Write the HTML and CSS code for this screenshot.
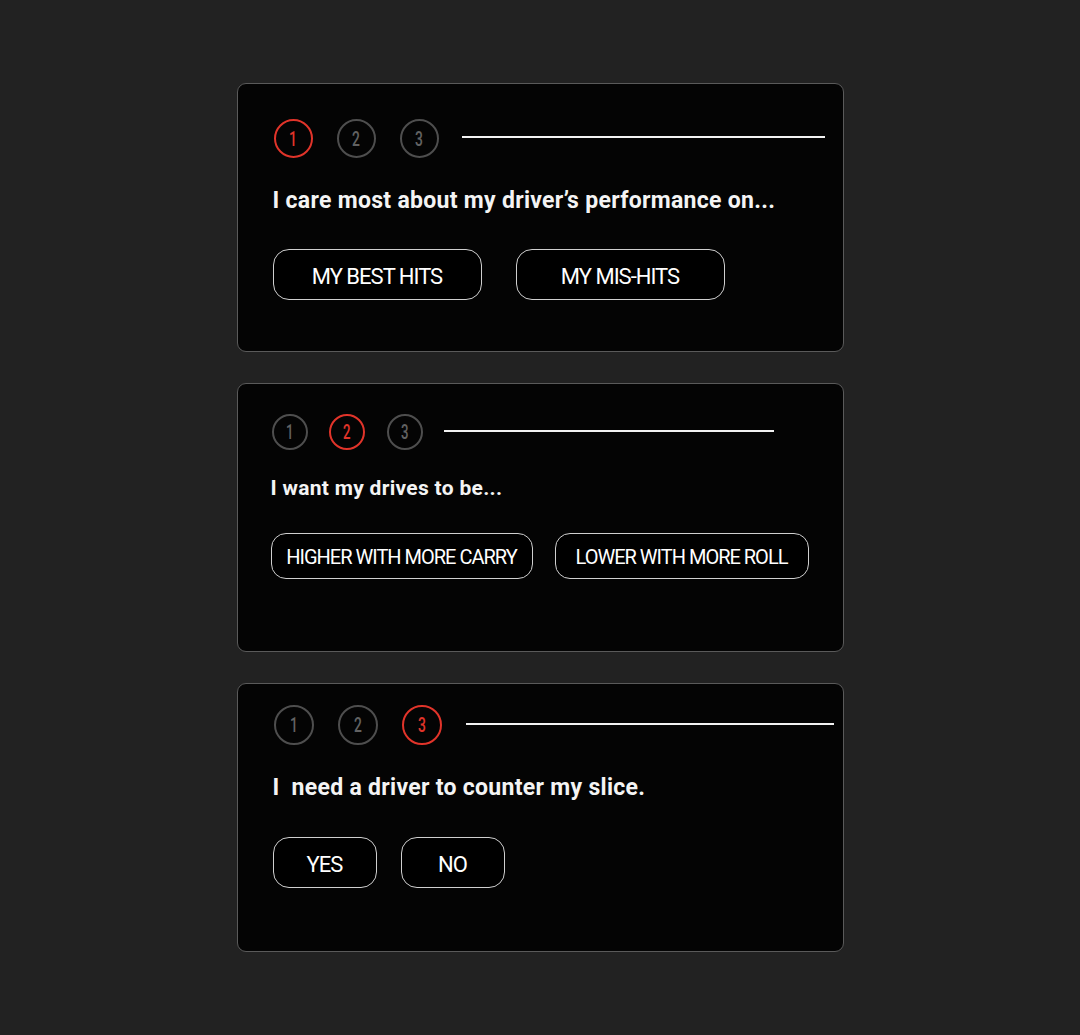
FILE: index.html
```html
<!DOCTYPE html>
<html lang="en">
<head>
<meta charset="utf-8">
<link rel="stylesheet" href="styles.css">
</head>
<body>
<main class="stack">
  <section class="card card-1">
    <div class="steps">
      <span class="step active"><span class="num">1</span></span>
      <span class="step"><span class="num">2</span></span>
      <span class="step"><span class="num">3</span></span>
      <span class="rule"></span>
    </div>
    <h2 class="question">I care most about my driver’s performance on...</h2>
    <div class="options">
      <button class="opt">MY BEST HITS</button>
      <button class="opt">MY MIS-HITS</button>
    </div>
  </section>

  <section class="card card-2">
    <div class="steps">
      <span class="step"><span class="num">1</span></span>
      <span class="step active"><span class="num">2</span></span>
      <span class="step"><span class="num">3</span></span>
      <span class="rule"></span>
    </div>
    <h2 class="question">I want my drives to be...</h2>
    <div class="options">
      <button class="opt opt-wide">HIGHER WITH MORE CARRY</button>
      <button class="opt opt-mid">LOWER WITH MORE ROLL</button>
    </div>
  </section>

  <section class="card card-3">
    <div class="steps">
      <span class="step"><span class="num">1</span></span>
      <span class="step"><span class="num">2</span></span>
      <span class="step active"><span class="num">3</span></span>
      <span class="rule"></span>
    </div>
    <h2 class="question">I&nbsp; need a driver to counter my slice.</h2>
    <div class="options">
      <button class="opt">YES</button>
      <button class="opt">NO</button>
    </div>
  </section>
</main>
</body>
</html>
```
FILE: styles.css
```css
html, body {
  margin: 0;
  padding: 0;
}
body {
  background: #222222;
  font-family: Roboto, "Liberation Sans", sans-serif;
  color: #ffffff;
  height: 1035px;
}
.stack {
  width: 607px;
  margin: 0 auto;
  padding-top: 83px;
  display: flex;
  flex-direction: column;
  gap: 31px;
}
.card {
  box-sizing: border-box;
  height: 269px;
  background: #040404;
  border: 1px solid #5a5a5a;
  border-radius: 9px;
  padding: 35px 18px 0 35px;
}
.steps {
  display: flex;
  align-items: center;
}
.step {
  box-sizing: border-box;
  width: 39px;
  height: 39px;
  border-radius: 50%;
  border: 2px solid #4e4e4e;
  display: flex;
  align-items: center;
  justify-content: center;
  color: #626262;
  font-size: 21px;
  font-weight: 500;
  margin-right: 24px;
  flex: none;
}
.step .num {
  display: inline-block;
  transform: scaleX(0.66);
}
.step.active {
  border-color: #e1342a;
  color: #e1342a;
}
.rule {
  flex: 1;
  height: 2px;
  background: #f2f2f2;
  margin-left: -1px;
  margin-top: -3px;
}
.question {
  margin: 0;
  font-size: 23px;
  font-weight: 700;
  letter-spacing: 0.3px;
  color: #f4f4f4;
}
.options {
  display: flex;
}
.opt {
  box-sizing: border-box;
  background: #000;
  color: #fff;
  border: 1px solid #cfcfcf;
  border-radius: 16px;
  font-family: Roboto, "Liberation Sans", sans-serif;
  font-size: 22px;
  font-weight: 400;
  letter-spacing: -1px;
  padding: 3px 0 0;
}

/* card 1 */
.card-1 .steps { margin-left: 1px; }
.card-1 .question { margin-top: 29px; line-height: 28px; }
.card-1 .options { margin-top: 34px; gap: 34px; }
.card-1 .opt { width: 209px; height: 51px; }

/* card 2 */
.card-2 { padding-top: 30px; padding-left: 33px; }
.card-2 .steps { margin-left: 1px; }
.card-2 .step { width: 36px; height: 36px; margin-right: 21px; font-size: 20px; }
.card-2 .step:nth-child(2) { margin-right: 22px; }
.card-2 .rule { flex: none; width: 330px; margin-left: 0; }
.card-2 .question { margin-top: 24px; font-size: 21px; line-height: 28px; }
.card-2 .options { margin-top: 31px; gap: 22px; }
.card-2 .opt { height: 46px; font-size: 20px; border-radius: 15px; padding-top: 1px; }
.card-2 .opt-wide { width: 262px; }
.card-2 .opt-mid { width: 254px; }

/* card 3 */
.card-3 { padding-top: 21px; padding-left: 35px; padding-right: 9px; }
.card-3 .steps { margin-left: 1px; }
.card-3 .step { width: 40px; height: 40px; margin-right: 24px; }
.card-3 .rule { margin-left: 0; margin-top: -3px; }
.card-3 .question { margin-top: 29px; line-height: 28px; }
.card-3 .options { margin-top: 35px; gap: 24px; }
.card-3 .opt { width: 104px; height: 51px; }
```
